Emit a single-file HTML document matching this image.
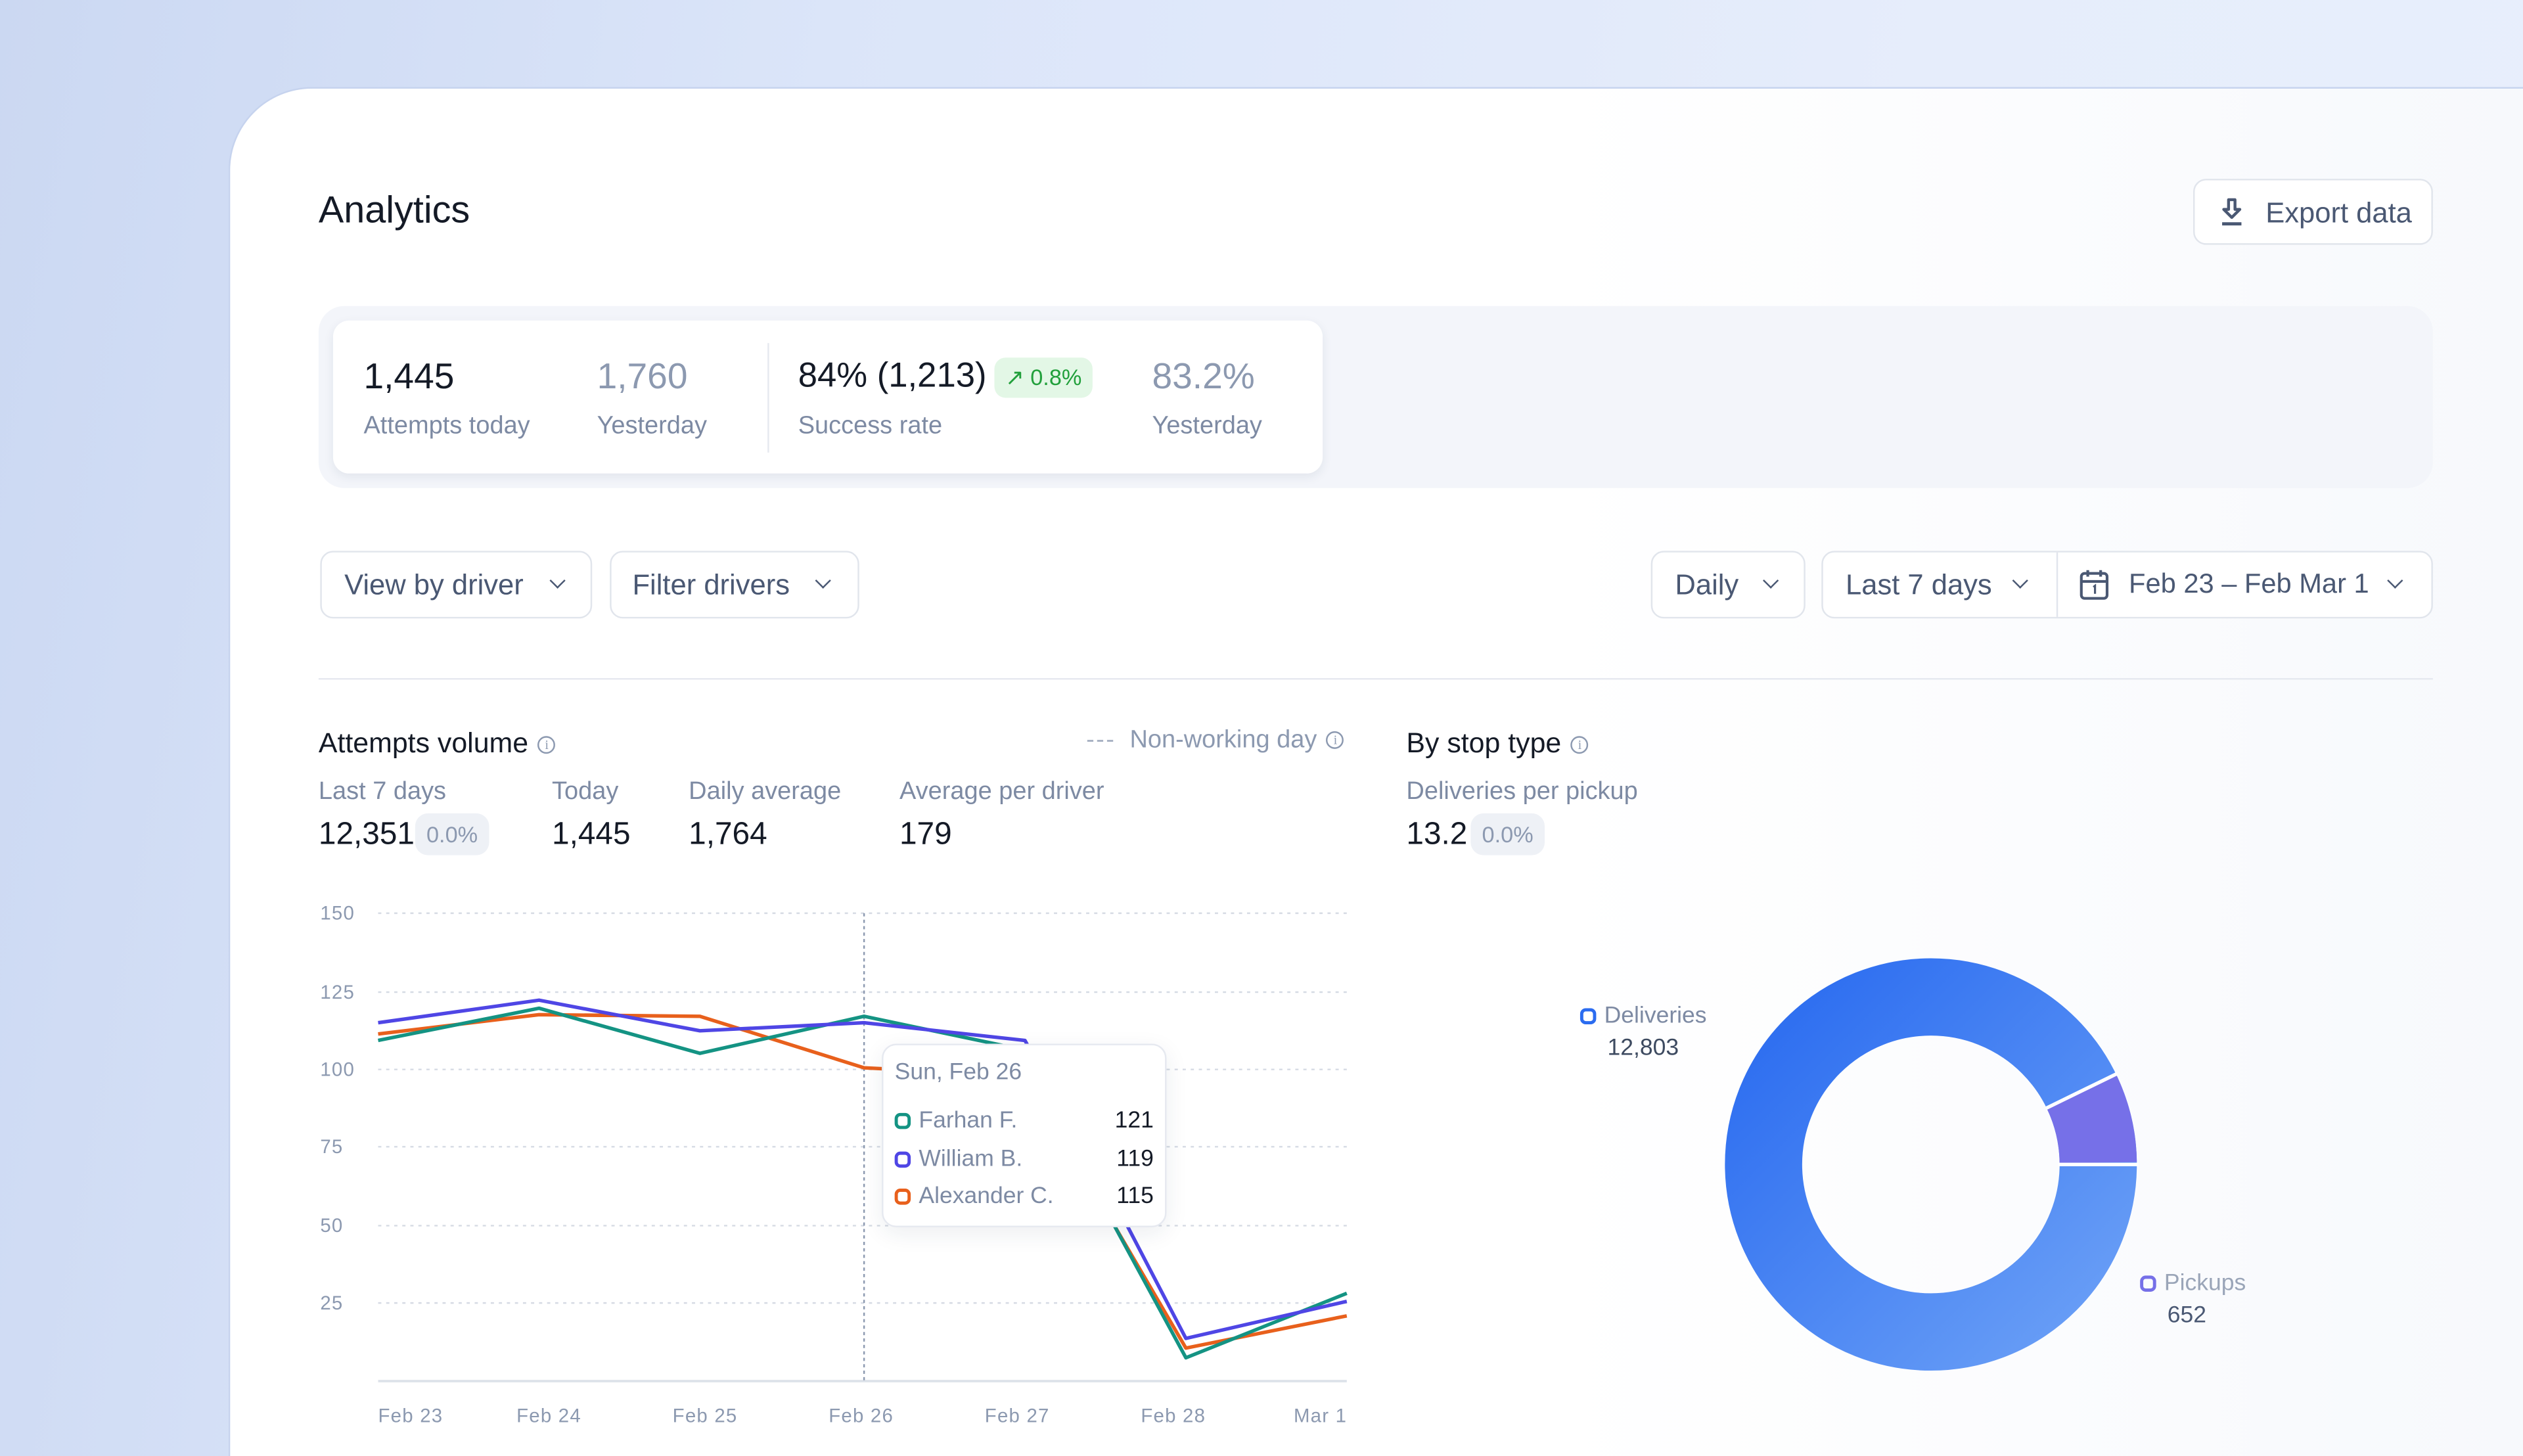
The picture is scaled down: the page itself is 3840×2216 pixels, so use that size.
<!DOCTYPE html>
<html><head><meta charset="utf-8"><style>
*{margin:0;padding:0;box-sizing:border-box}
html,body{width:3840px;height:2216px;overflow:hidden;position:relative}
body{background:linear-gradient(100deg,#cbd8f2 0%,#dbe5f9 30%,#e6edfb 70%,#e8effc 100%);font-family:"Liberation Sans",sans-serif}
#s{position:absolute;left:0;top:0;width:1568px;height:904px;overflow:hidden;transform:scale(2.449,2.4513);transform-origin:0 0}
.a{position:absolute;white-space:nowrap}
.card{position:absolute;left:142px;top:54px;width:1500px;height:860px;background:linear-gradient(90deg,#fff 0%,#fff 55%,#f6f8fc 100%);border-top-left-radius:52px;border:1px solid #c6d3ee;border-right:none;border-bottom:none}
.btn{position:absolute;border:1px solid #e1e5ec;border-radius:8px;background:#fff;height:42px;color:#4a5873;font-size:17.8px;line-height:40px}
.chev{display:inline-block;width:7px;height:7px;border-right:1.8px solid #4a5873;border-bottom:1.8px solid #4a5873;transform:rotate(45deg);position:absolute;top:14px}
.lbl{color:#7d8aa3;font-size:15.5px}
.big{color:#141a26;font-size:22.5px}
.gray{color:#8c99b0}
.val{color:#141a26;font-size:19.5px}
.pill{position:absolute;background:#eef1f6;border-radius:8px;color:#8c99b0;font-size:14px;height:26px;line-height:26px;padding:0 7px}
.sq{display:inline-block;width:10px;height:10px;border:2.4px solid;border-radius:3.5px;vertical-align:-1px;margin-right:5px}
.ic{display:inline-block;width:11px;height:11px;border:1.2px solid #8c99b0;border-radius:50%;font-size:8px;line-height:9px;text-align:center;color:#8c99b0;vertical-align:2px;margin-left:6px;font-family:"Liberation Serif",serif}
</style></head><body><div id="s">
<div class="card"></div>
<div class="a" style="left:198px;top:117px;font-size:23.5px;color:#141a26">Analytics</div>
<div class="btn" style="left:1363px;top:111px;width:149px;height:41px">
<svg style="position:absolute;left:15px;top:11px" width="16" height="18" viewBox="0 0 16 18"><path d="M6 1h4v6h3l-5 5-5-5h3z" fill="none" stroke="#4a5873" stroke-width="1.8" stroke-linejoin="round"/><path d="M2 16h12" stroke="#4a5873" stroke-width="2"/></svg>
<span class="a" style="left:44px;top:0">Export data</span></div>

<div class="a" style="left:198px;top:190px;width:1314px;height:113px;background:#f3f5fa;border-radius:16px"></div>
<div class="a" style="left:207px;top:199px;width:615px;height:95px;background:#fff;border-radius:10px;box-shadow:0 2px 6px rgba(30,45,80,.08)"></div>
<div class="a big" style="left:226px;top:221px">1,445</div>
<div class="a lbl" style="left:226px;top:256px">Attempts today</div>
<div class="a big gray" style="left:371px;top:221px">1,760</div>
<div class="a lbl" style="left:371px;top:256px">Yesterday</div>
<div class="a" style="left:477px;top:213px;width:1px;height:68px;background:#e6e9ef"></div>
<div class="a big" style="left:496px;top:221px;font-size:21.5px">84% (1,213)</div>
<div class="a" style="left:618px;top:222px;width:61px;height:25px;background:#e3f7e6;border-radius:7px;color:#22a03c;font-size:14px;line-height:25px;text-align:center">↗ 0.8%</div>
<div class="a lbl" style="left:496px;top:256px">Success rate</div>
<div class="a big gray" style="left:716px;top:221px">83.2%</div>
<div class="a lbl" style="left:716px;top:256px">Yesterday</div>

<div class="btn" style="left:199px;top:342px;width:169px"><span class="a" style="left:14px">View by driver</span><i class="chev" style="left:143px"></i></div>
<div class="btn" style="left:379px;top:342px;width:155px"><span class="a" style="left:13px">Filter drivers</span><i class="chev" style="left:128px"></i></div>
<div class="btn" style="left:1026px;top:342px;width:96px"><span class="a" style="left:14px">Daily</span><i class="chev" style="left:70px"></i></div>
<div class="btn" style="left:1132px;top:342px;width:380px"><span class="a" style="left:14px">Last 7 days</span><i class="chev" style="left:119px"></i>
<div class="a" style="left:145px;top:0;width:1px;height:40px;background:#e1e5ec"></div>
<svg style="position:absolute;left:159px;top:10px" width="19" height="20" viewBox="0 0 19 20"><rect x="1.5" y="3" width="16" height="15.5" rx="2" fill="none" stroke="#4a5873" stroke-width="1.7"/><path d="M1.5 8h16M5.5 1v4M13.5 1v4" stroke="#4a5873" stroke-width="1.7"/><path d="M9 11.5l1-0.8v5" stroke="#4a5873" stroke-width="1.3" fill="none"/></svg>
<span class="a" style="left:190px;font-size:17px">Feb 23 – Feb Mar 1</span><i class="chev" style="left:352px"></i></div>
<div class="a" style="left:198px;top:421px;width:1314px;height:1px;background:#e6e9f0"></div>

<div class="a" style="left:198px;top:451px;font-size:17.5px;color:#141a26">Attempts volume<span class="ic">i</span></div>
<div class="a" style="left:675px;top:451px;font-size:15.5px;color:#8c99b0"><span style="letter-spacing:1px;color:#a9b3c4">---</span> &nbsp;Non-working day<span class="ic">i</span></div>
<div class="a lbl" style="left:198px;top:483px">Last 7 days</div>
<div class="a val" style="left:198px;top:507px">12,351</div>
<div class="pill" style="left:258px;top:505px">0.0%</div>
<div class="a lbl" style="left:343px;top:483px">Today</div>
<div class="a val" style="left:343px;top:507px">1,445</div>
<div class="a lbl" style="left:428px;top:483px">Daily average</div>
<div class="a val" style="left:428px;top:507px">1,764</div>
<div class="a lbl" style="left:559px;top:483px">Average per driver</div>
<div class="a val" style="left:559px;top:507px">179</div>

<svg class="a" style="left:0;top:0" width="1568" height="904" viewBox="0 0 1568 904">
<g font-family="Liberation Sans,sans-serif" font-size="12" fill="#8c99b0" letter-spacing="0.5">
<text x="199" y="571">150</text><text x="199" y="620">125</text><text x="199" y="668">100</text><text x="199" y="716">75</text><text x="199" y="765">50</text><text x="199" y="813">25</text>
<text x="235" y="883">Feb 23</text><text x="321" y="883">Feb 24</text><text x="418" y="883">Feb 25</text><text x="515" y="883">Feb 26</text><text x="612" y="883">Feb 27</text><text x="709" y="883">Feb 28</text><text x="804" y="883">Mar 1</text></g>
<g stroke="#d6dbe4" stroke-width="1" stroke-dasharray="2 3"><path d="M235 567H837M235 616H837M235 664H837M235 712H837M235 761H837M235 809H837"/></g>
<path d="M235 857.5H837" stroke="#dde2ea" stroke-width="1.5"/>
<path d="M537 567V857" stroke="#8c99b0" stroke-width="1" stroke-dasharray="2 2"/>
<g fill="none" stroke-width="2.2" stroke-linejoin="round">
<polyline stroke="#e8601c" points="235,642 335,630 435,631 537,663 637,668 692,760 737,837 837,817"/>
<polyline stroke="#149383" points="235,646 335,626 435,654 537,631 637,652 692,760 737,843 837,803"/>
<polyline stroke="#4f46e5" points="235,635 335,621 435,640 537,635 637,646 700,760 737,831 837,808"/>
</g>
<g transform="translate(1200,723)">
<defs><linearGradient id="g" x1="0" y1="0" x2="1" y2="1"><stop offset="0" stop-color="#2b6cf0"/><stop offset="1" stop-color="#6a9ff6"/></linearGradient></defs>
<circle r="104" fill="none" stroke="url(#g)" stroke-width="48"/>
<circle r="104" fill="none" stroke="#7670e8" stroke-width="48" stroke-dasharray="46 700" transform="rotate(-26)"/>
<path d="M79 0H129M71.8 -35 115.9 -56.5" stroke="#fff" stroke-width="2.2"/>
</g>
</svg>

<div class="a" style="left:548px;top:648px;width:177px;height:114px;background:#fff;border:1px solid #e6e9f0;border-radius:9px;box-shadow:0 4px 14px rgba(30,45,80,.08)"></div>
<div class="a" style="left:556px;top:658px;font-size:14.5px;color:#7d8aa3">Sun, Feb 26</div>
<div class="a" style="left:556px;top:688px;font-size:14.5px;color:#7d8aa3"><span class="sq" style="border-color:#149383"></span>Farhan F.</div>
<div class="a" style="left:556px;top:712px;font-size:14.5px;color:#7d8aa3"><span class="sq" style="border-color:#4f46e5"></span>William B.</div>
<div class="a" style="left:556px;top:735px;font-size:14.5px;color:#7d8aa3"><span class="sq" style="border-color:#e8601c"></span>Alexander C.</div>
<div class="a" style="left:690px;top:688px;width:27px;text-align:right;font-size:14.5px;color:#141a26">121</div>
<div class="a" style="left:690px;top:712px;width:27px;text-align:right;font-size:14.5px;color:#141a26">119</div>
<div class="a" style="left:690px;top:735px;width:27px;text-align:right;font-size:14.5px;color:#141a26">115</div>

<div class="a" style="left:874px;top:451px;font-size:17.5px;color:#141a26">By stop type<span class="ic">i</span></div>
<div class="a lbl" style="left:874px;top:483px">Deliveries per pickup</div>
<div class="a val" style="left:874px;top:507px">13.2</div>
<div class="pill" style="left:914px;top:505px">0.0%</div>
<div class="a" style="left:982px;top:623px;font-size:14.5px;color:#7d8aa3"><span class="sq" style="border-color:#2b6cf0"></span>Deliveries</div>
<div class="a" style="left:999px;top:643px;font-size:14.5px;color:#3d4a60">12,803</div>
<div class="a" style="left:1330px;top:789px;font-size:14.5px;color:#9aa5b8"><span class="sq" style="border-color:#7670e8"></span>Pickups</div>
<div class="a" style="left:1347px;top:809px;font-size:14.5px;color:#4a5873">652</div>
</div></body></html>
